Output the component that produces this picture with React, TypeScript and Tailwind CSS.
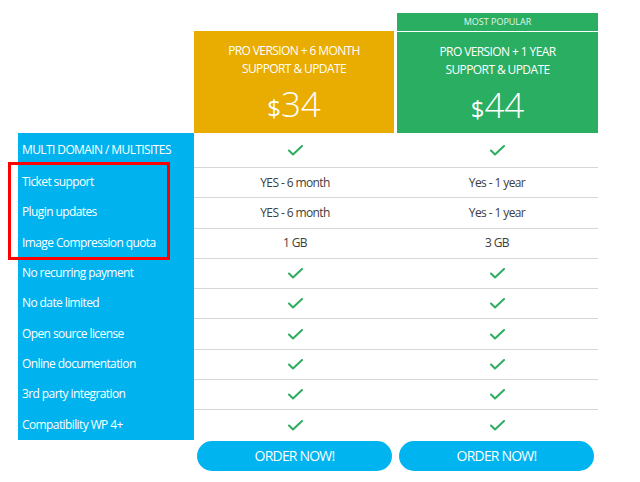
const FONT = "font-['Open_Sans',sans-serif]";

const ROWS: { label: string; a: string | null; b: string | null }[] = [
  { label: "MULTI DOMAIN / MULTISITES", a: null, b: null },
  { label: "Ticket support", a: "YES - 6 month", b: "Yes - 1 year" },
  { label: "Plugin updates", a: "YES - 6 month", b: "Yes - 1 year" },
  { label: "Image Compression quota", a: "1 GB", b: "3 GB" },
  { label: "No recurring payment", a: null, b: null },
  { label: "No date limited", a: null, b: null },
  { label: "Open source license", a: null, b: null },
  { label: "Online documentation", a: null, b: null },
  { label: "3rd party integration", a: null, b: null },
  { label: "Compatibility WP 4+", a: null, b: null },
];

function Check() {
  return (
    <svg width="15" height="11" viewBox="0 0 15 11" fill="none">
      <polyline
        points="1,5.5 5,9.5 14,1"
        stroke="#2eac5f"
        strokeWidth="2"
        strokeLinecap="round"
        strokeLinejoin="round"
      />
    </svg>
  );
}

function Cell({ value, first }: { value: string | null; first: boolean }) {
  return (
    <div
      className={`flex items-center justify-center text-[12px] tracking-[-0.6px] text-[#3d3d3d] ${
        first ? "" : "border-t border-[#d6d6d6]"
      }`}
    >
      {value === null ? <Check /> : value}
    </div>
  );
}

function PlanHeader({
  title1,
  title2,
  price,
}: {
  title1: string;
  title2: string;
  price: string;
}) {
  return (
    <div className="flex flex-col items-center pt-[11px] text-white">
      <div className="text-[12px] leading-[18px] tracking-[-0.6px] text-center">
        {title1}
        <br />
        {title2}
      </div>
      <div className="mt-[6px] flex items-baseline leading-[40px] font-light">
        <span className="text-[24px] font-normal">$</span>
        <span className="text-[35px]">{price}</span>
      </div>
    </div>
  );
}

export default function App() {
  return (
    <div className={`relative w-[640px] h-[482px] bg-white ${FONT}`}>
      <div className="ml-[18px] pt-[13px] w-[580px]">
        {/* Header */}
        <div className="grid grid-cols-[176px_202px_202px] h-[120px]">
          <div />
          <div className="pt-[18px] pr-[2px]">
            <div className="h-[102px] bg-[#e9ac00]">
              <PlanHeader
                title1="PRO VERSION + 6 MONTH"
                title2="SUPPORT & UPDATE"
                price="34"
              />
            </div>
          </div>
          <div className="pl-[1px] flex flex-col">
            <div className="h-[18px] bg-[#29ae62] flex items-center justify-center text-[9px] text-[#e4f6ea]">
              MOST POPULAR
            </div>
            <div className="h-[1px] bg-white" />
            <div className="flex-1 bg-[#29ae62]">
              <PlanHeader
                title1="PRO VERSION + 1 YEAR"
                title2="SUPPORT & UPDATE"
                price="44"
              />
            </div>
          </div>
        </div>

        {/* Feature rows */}
        <div className="flex flex-col">
          {ROWS.map((row, i) => (
            <div
              key={row.label}
              className={`grid grid-cols-[176px_202px_202px] ${
                i === 0 ? "h-[34px]" : "h-[30.3px]"
              }`}
            >
              <div className="bg-[#00b3ef] flex items-center pl-[4px] text-[12px] tracking-[-0.6px] text-white">
                {row.label}
              </div>
              <Cell value={row.a} first={i === 0} />
              <Cell value={row.b} first={i === 0} />
            </div>
          ))}
        </div>

        {/* Buttons */}
        <div className="grid grid-cols-[176px_202px_202px] mt-[1px]">
          <div />
          {[0, 1].map((k) => (
            <div key={k} className="pl-[3px] pr-[4px]">
              <button className="w-full h-[30px] rounded-full bg-[#00b4f0] text-white text-[14px] tracking-[-0.8px]">
                ORDER NOW!
              </button>
            </div>
          ))}
        </div>
      </div>

      {/* Annotation box */}
      <div className="absolute left-[8px] top-[162px] w-[162px] h-[98px] border-[3px] border-[#fe0000]" />
    </div>
  );
}
